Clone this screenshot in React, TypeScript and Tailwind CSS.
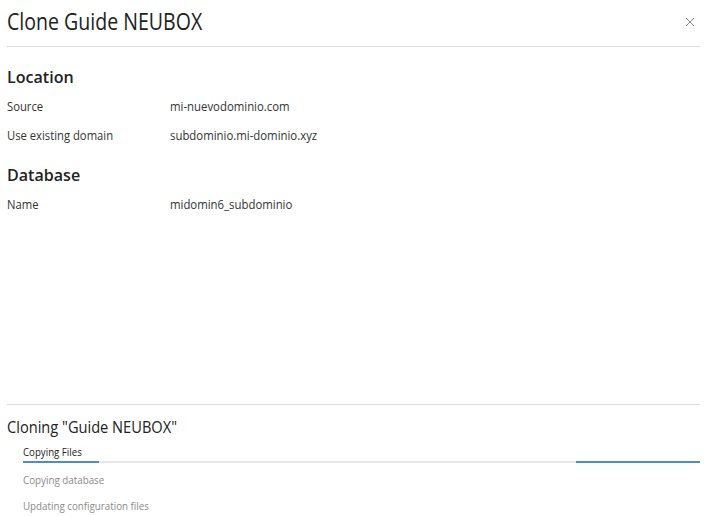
import React from "react";

function Row({ label, value }: { label: string; value: string }) {
  return (
    <div className="flex text-[12.5px] leading-[18px] text-[#333]">
      <span className="w-[163px] shrink-0">
        <span className="inline-block scale-x-[0.9] origin-left whitespace-nowrap">{label}</span>
      </span>
      <span className="inline-block scale-x-[0.91] origin-left whitespace-nowrap">{value}</span>
    </div>
  );
}

export default function App() {
  const font = { fontFamily: '"Open Sans", sans-serif' };
  return (
    <div className="w-[722px] h-[516px] bg-white overflow-hidden text-[#333]" style={font}>
      <div className="ml-[7px] w-[693px]">
        <div className="flex items-center justify-between h-[47px] border-b border-[#dddddd]">
          <h1 className="text-[23px] leading-none text-[#222] -mt-[4px] scale-x-[0.85] origin-left whitespace-nowrap">Clone Guide NEUBOX</h1>
          <svg width="10" height="10" viewBox="0 0 10 10" className="text-[#888] -mt-[2px] mr-[5px]">
            <path d="M1 1L9 9M9 1L1 9" stroke="currentColor" strokeWidth="1" />
          </svg>
        </div>
        <div className="h-[357px] pt-[18px]">
          <h2 className="text-[17px] font-semibold leading-[24px] text-[#222] scale-x-[0.945] origin-left">Location</h2>
          <div className="mt-[9px] flex flex-col gap-[11px]">
            <Row label="Source" value="mi-nuevodominio.com" />
            <Row label="Use existing domain" value="subdominio.mi-dominio.xyz" />
          </div>
          <h2 className="mt-[18px] text-[17px] font-semibold leading-[24px] text-[#222] scale-x-[0.945] origin-left">Database</h2>
          <div className="mt-[9px] flex flex-col">
            <Row label="Name" value="midomin6_subdominio" />
          </div>
        </div>
        <div className="border-t border-[#dddddd] pt-[10px]">
          <h3 className="text-[17px] leading-[24px] text-[#222] scale-x-[0.86] origin-left whitespace-nowrap">Cloning "Guide NEUBOX"</h3>
          <div className="pl-[16px] mt-[4px] text-[11px]">
            <div className="leading-[18px] text-[#222]">
              <span className="inline-block scale-x-[0.88] origin-left">Copying Files</span>
            </div>
            <div className="relative h-[2px] bg-[#e6e6e6]">
              <div className="absolute left-0 top-0 h-[2px] w-[76px] bg-[#4a90b8]" />
              <div className="absolute right-0 top-0 h-[2px] w-[124px] bg-[#4a90b8]" />
            </div>
            <div className="mt-[8px] leading-[18px] text-[#8a8a8a]">
              <span className="inline-block scale-x-[0.89] origin-left">Copying database</span>
            </div>
            <div className="mt-[8px] leading-[18px] text-[#8a8a8a]">
              <span className="inline-block scale-x-[0.887] origin-left">Updating configuration files</span>
            </div>
          </div>
        </div>
      </div>
    </div>
  );
}
